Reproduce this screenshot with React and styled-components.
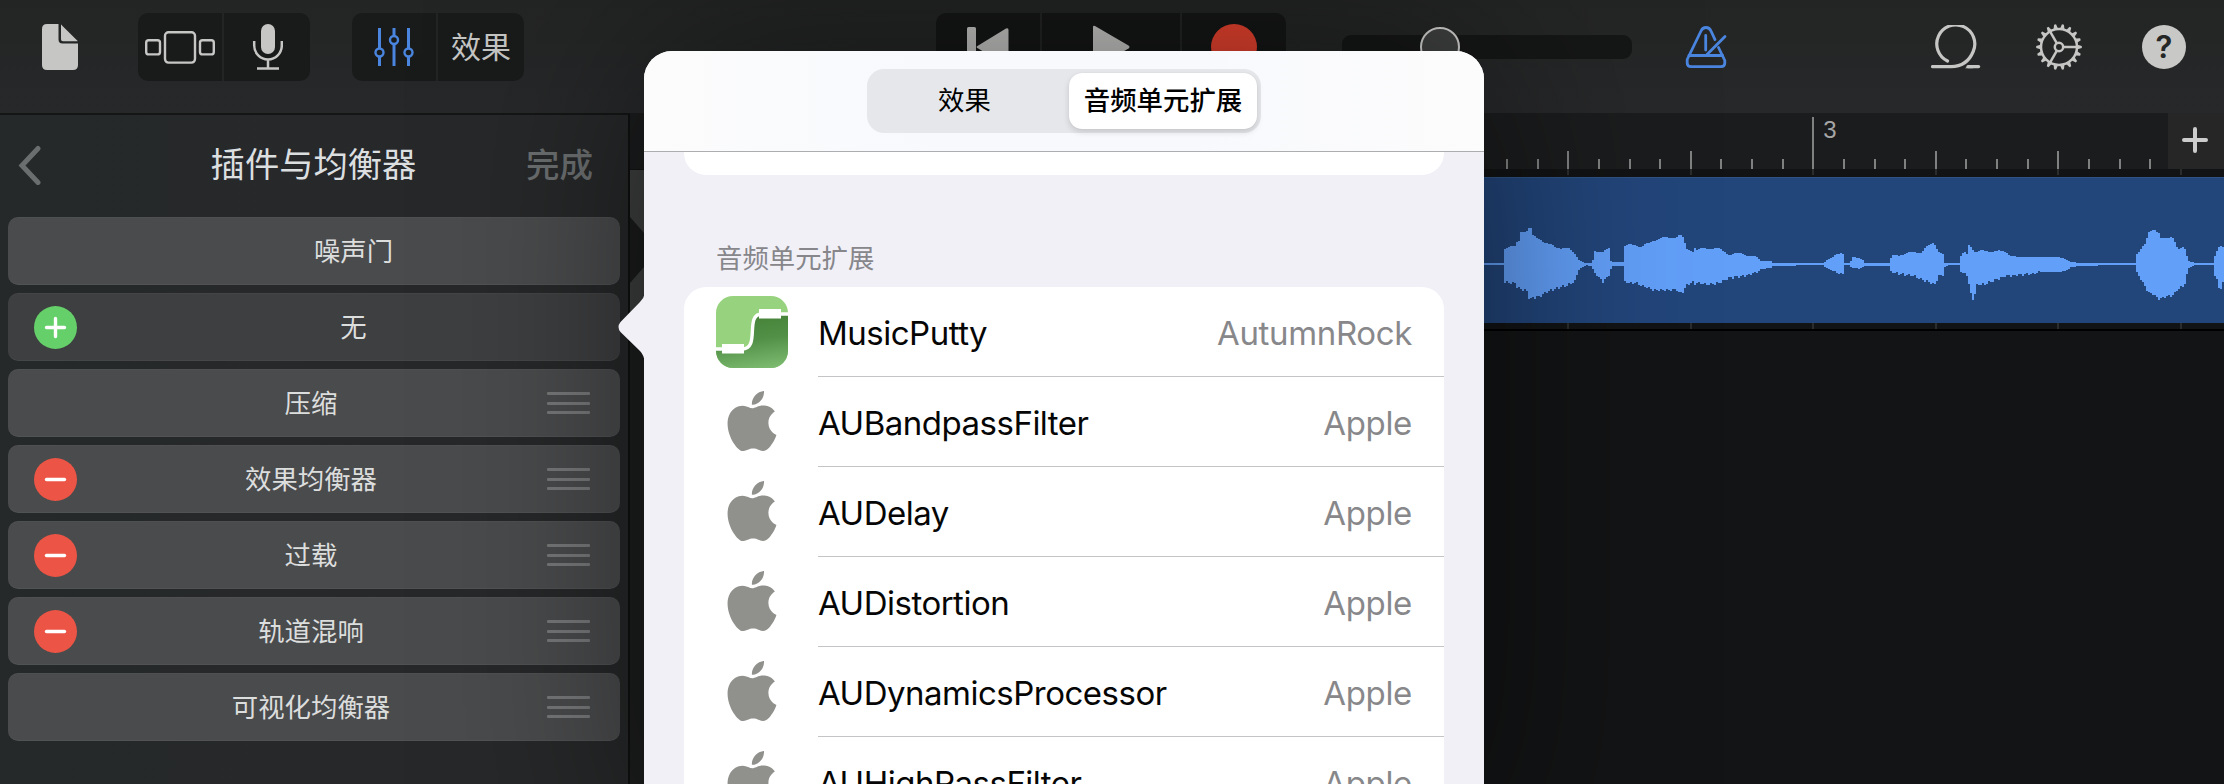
import React from "react";
import styled, { createGlobalStyle, css } from "styled-components";
import { SiApple } from "react-icons/si";

const Global = createGlobalStyle`
  *, *::before, *::after { box-sizing: border-box; }
  html, body { margin: 0; padding: 0; background: #131415; }
  body { font-family: Inter, "Noto Sans CJK SC", sans-serif; }
`;

const Screen = styled.div`
  position: relative;
  width: 2224px;
  height: 784px;
  overflow: hidden;
  display: flex;
  flex-direction: column;
  background: #131415;
`;

/* ---------- Toolbar ---------- */

const Toolbar = styled.header`
  flex: none;
  height: 113px;
  display: flex;
  align-items: flex-start;
  padding: 13px 38px 0 42px;
  background: linear-gradient(#232524, #27282a);
`;

const Slot = styled.div`
  flex: none;
  height: 68px;
  width: ${(p) => p.$w}px;
  margin-left: ${(p) => p.$gap || 0}px;
  display: flex;
  align-items: center;
  justify-content: center;
  color: ${(p) => p.$color || "#c6c6c5"};
`;

const ButtonGroup = styled.div`
  flex: none;
  display: flex;
  height: 68px;
  margin-left: ${(p) => p.$gap}px;
  border-radius: 10px;
  overflow: hidden;
  background: ${(p) => (p.$deep ? "#151716" : "#191b1a")};
`;

const GroupButton = styled.div`
  width: ${(p) => p.$w}px;
  display: flex;
  align-items: center;
  justify-content: center;
  color: ${(p) => p.$color || "#c6c6c5"};
  font-size: 30px;
  line-height: 68px;
  & + & {
    border-left: 2px solid #232524;
  }
`;

const VolumeTrack = styled.div`
  flex: none;
  width: 290px;
  height: 24px;
  margin: 22px 0 0 56px;
  padding-left: 78px;
  border-radius: 9px;
  background: #151716;
  display: flex;
  align-items: center;
`;

const VolumeKnob = styled.div`
  flex: none;
  width: 40px;
  height: 40px;
  border-radius: 50%;
  background: #3e403f;
  border: 2px solid #d0d0ce;
`;

/* ---------- Plug-in sidebar ---------- */

const Main = styled.main`
  flex: 1;
  min-height: 0;
  display: flex;
`;

const Sidebar = styled.aside`
  flex: none;
  width: 630px;
  border-top: 2px solid #141616;
  border-right: 2px solid #0f1010;
  background: linear-gradient(90deg, #25292a, #272829 60%, #262829);
`;

const SidebarHead = styled.div`
  height: 100px;
  margin-bottom: 2px;
  padding: 0 35px 0 18px;
  display: grid;
  grid-template-columns: 83px 1fr 67px;
  align-items: center;
`;

const SidebarTitle = styled.div`
  text-align: center;
  font-size: 34.3px;
  line-height: 50px;
  color: #dcdfe0;
`;

const DoneLabel = styled.div`
  font-size: 33.5px;
  line-height: 50px;
  font-weight: 500;
  color: #6c6f70;
  white-space: nowrap;
`;

const PluginList = styled.div`
  padding: 0 8px;
  display: flex;
  flex-direction: column;
  gap: 8px;
`;

const PluginRow = styled.div`
  height: 68px;
  display: flex;
  align-items: center;
  border-radius: 10px;
  background: ${(p) => (p.$empty ? "#3e3f40" : "#4a4b4c")};
  box-shadow: inset 0 -1px 0 rgba(255, 255, 255, 0.04), inset 0 1px 0 rgba(255, 255, 255, 0.03);
`;

const RowLead = styled.div`
  flex: none;
  width: 79px;
  padding-left: 26px;
`;

const RowLabel = styled.div`
  flex: 1;
  text-align: center;
  font-size: 26.4px;
  line-height: 40px;
  font-weight: 400;
  color: #dcdddd;
`;

const Badge = styled.div`
  width: 43px;
  height: 43px;
  border-radius: 50%;
  background: ${(p) => (p.$add ? "#65d069" : "#ec5545")};
  display: flex;
`;

const Grip = styled.div`
  flex: none;
  width: 85px;
  height: 22px;
  padding: 0 30px 0 12px;
  display: flex;
  flex-direction: column;
  justify-content: space-between;
  &::before,
  &::after {
    content: "";
  }
  &::before,
  &::after,
  & > i {
    height: 3px;
    border-radius: 1px;
    background: #77797a;
  }
`;

/* ---------- Timeline ---------- */

const Timeline = styled.section`
  flex: 1;
  min-width: 0;
  display: flex;
  flex-direction: column;
`;

const RulerRow = styled.div`
  flex: none;
  height: 56px;
  display: flex;
  background: #1b1c1d;
`;

const Ticks = styled.div`
  flex: 1;
  min-width: 0;
  height: 100%;
  overflow: hidden;
  display: flex;
  align-items: ${(p) => (p.$faint ? "flex-start" : "flex-end")};
  padding-left: 18.600px;
`;

const tickHeights = { bar: 52, beat: 18, minor: 10 };

const Tick = styled.div`
  flex: none;
  width: 30.630px;
  height: ${(p) => tickHeights[p.$kind]}px;
  border-left: 2px solid #7f8080;
  padding-left: 9px;
  font: 400 24px/26px "Liberation Sans", sans-serif;
  color: #a5a6a6;
  ${(p) =>
    p.$faint &&
    css`
      height: 6px;
      border-color: ${p.$kind === "minor" ? "transparent" : "#2b2d2d"};
    `}
`;

const AddTrack = styled.div`
  flex: none;
  width: 56px;
  display: flex;
  align-items: center;
  justify-content: center;
  padding-right: 3px;
  background: #252625;
`;

const Gap = styled.div`
  flex: none;
  height: ${(p) => p.$h}px;
  background: #121314;
`;

const TrackRow = styled.div`
  flex: none;
  height: 146px;
  display: flex;
  background: #22457a;
  border-top: 1px solid #2f5384;
`;

const TrackLead = styled.div`
  flex: none;
  width: 854px;
  margin-top: -8px;
  background: #1a1c1b;
`;

const Lanes = styled.div`
  flex: 1;
  border-top: 2px solid #000;
  background: linear-gradient(90deg, #1c1e1d 30px, #131415 30px);
`;

/* ---------- Popover ---------- */

const Popover = styled.div`
  position: absolute;
  left: 644px;
  top: 51px;
  width: 840px;
  height: 800px;
  border-radius: 28px;
  background: #f1f0f6;
  box-shadow: 0 0 200px rgba(0, 0, 0, 0.5);
`;

const Arrow = styled.svg`
  position: absolute;
  left: -26px;
  top: 242px;
`;

const PopoverHead = styled.div`
  height: 101px;
  display: flex;
  align-items: flex-start;
  justify-content: center;
  padding: 18px 0 0 0;
  border-radius: 28px 28px 0 0;
  border-bottom: 1px solid #acadaf;
  background: linear-gradient(90deg, #fcfcfc, #f7f9fd 35%, #f8f9fd 65%, #fcfcfc);
`;

const Segmented = styled.div`
  width: 394px;
  height: 64px;
  padding: 4px;
  border-radius: 17px;
  display: flex;
  background: #e6e7eb;
`;

const Segment = styled.div`
  width: ${(p) => (p.$on ? 188 : 198)}px;
  height: 56px;
  padding-right: ${(p) => (p.$on ? 0 : 11)}px;
  border-radius: 13px;
  text-align: center;
  font-size: 26.4px;
  line-height: 55.500px;
  font-weight: ${(p) => (p.$on ? 500 : 400)};
  color: #000;
  ${(p) =>
    p.$on &&
    css`
      background: #fff;
      box-shadow: 0 3px 6px rgba(0, 0, 0, 0.14), 0 0 1px rgba(0, 0, 0, 0.1);
    `}
`;

const PopoverBody = styled.div`
  padding: 0 40px;
`;

const PriorCard = styled.div`
  height: 23px;
  border-radius: 0 0 22px 22px;
  background: #fff;
`;

const SectionLabel = styled.div`
  height: 112px;
  padding: 63px 0 0 32px;
  font-size: 26.4px;
  line-height: 40px;
  color: #86868b;
`;

const UnitList = styled.div`
  border-radius: 22px 22px 0 0;
  background: #fff;
`;

const UnitRow = styled.div`
  height: 90px;
  display: flex;
`;

const UnitIcon = styled.div`
  flex: none;
  width: 134px;
  padding: ${(p) => (p.$logo ? "0 0 2px 38px" : "0 0 0 32px")};
  display: flex;
  align-items: center;
  color: #90918c;
`;

const UnitText = styled.div`
  flex: 1;
  display: flex;
  justify-content: space-between;
  padding: 0 32px 0 0;
  border-bottom: 1px solid #c4c4c6;
  font-size: 33px;
  line-height: 93px;
  letter-spacing: -0.5px;
  color: #060606;
`;

const Vendor = styled.span`
  letter-spacing: -0.35px;
  color: #88888b;
`;

/* ---------- Drawings ---------- */

const DocIcon = () => (
  <svg width="36" height="46" viewBox="0 0 36 46" fill="currentColor">
    <path d="M5 0H16.5V15.5Q16.5 19.6 20.5 19.6H36V41Q36 46 31 46H5Q0 46 0 41V5Q0 0 5 0Z" />
    <path d="M19 .6Q19.4 .8 20 1.4L35.2 16.6Q35.6 17 35.6 17.2H21Q19 17.2 19 15.2Z" />
  </svg>
);

const BrowserIcon = () => (
  <svg width="70" height="33" viewBox="0 0 70 33" fill="none" stroke="currentColor" strokeWidth="2.4">
    <rect x="1.2" y="9.2" width="13.8" height="14.2" rx="2.5" />
    <rect x="20" y="1.2" width="30" height="30.4" rx="3.5" />
    <rect x="55" y="9.2" width="13.8" height="14.2" rx="2.5" />
  </svg>
);

const MicIcon = () => (
  <svg width="32" height="46" viewBox="0 0 32 46" fill="none" stroke="currentColor" strokeWidth="2.5">
    <rect x="10" y="0" width="14" height="30" rx="7" fill="currentColor" stroke="none" />
    <path d="M3.200 17V21.5A13.8 14 0 0 0 30.800 21.5V17M17 35.5V44M6 44.6H28" />
  </svg>
);

const FadersIcon = () => (
  <svg width="40" height="38" viewBox="0 0 40 38" fill="none" stroke="currentColor" strokeWidth="3">
    <path d="M5.5 0V20M5.5 29V38M20 0V7.5M20 16.5V38M34.5 0V20M34.5 29V38" />
    <circle cx="5.5" cy="24.5" r="4" strokeWidth="2.4" />
    <circle cx="20" cy="12" r="4" strokeWidth="2.4" />
    <circle cx="34.5" cy="24.5" r="4" strokeWidth="2.4" />
  </svg>
);

const RewindIcon = () => (
  <svg width="42" height="40" viewBox="0 0 42 40" fill="currentColor">
    <rect x="0" y="0" width="9" height="40" rx="1.5" />
    <path d="M39 1.6L10 19.2Q9 20 10 20.8L39 38.4Q41.500 39.500 41.500 37V3Q41.500 .5 39 1.600Z" />
  </svg>
);

const PlayIcon = () => (
  <svg width="38" height="44" viewBox="0 0 38 44" fill="currentColor">
    <path d="M1 2Q1 .2 3 1L36.500 20.500Q38.500 22 36.500 23.500L3 43Q1 44 1 42Z" />
  </svg>
);

const RecordIcon = () => (
  <svg width="46" height="46" viewBox="0 0 46 46" fill="#e8432f">
    <circle cx="23" cy="23" r="23" />
  </svg>
);

const MetronomeIcon = () => (
  <svg width="42" height="42" viewBox="0 0 42 42" fill="none" stroke="currentColor" strokeWidth="2.8" strokeLinecap="round" strokeLinejoin="round">
    <path d="M30 13.600L26 5Q24.500 1.500 21 1.500Q17.500 1.500 16 5L2.200 33.500V37Q2.200 40.600 6 40.600H36Q39.800 40.600 39.800 37V34.500L33.500 21.500" />
    <path d="M4 29.500H37.500M20.700 9.500V24M40 10.500L22 28.500" />
  </svg>
);

const LoopIcon = () => (
  <svg width="50" height="44" viewBox="0 0 50 44" fill="none" stroke="currentColor" strokeWidth="3.2">
    <path d="M16.500 36A19 19 0 1 1 42.200 26.500Q36 41.600 20 41.600H1.500" strokeLinecap="round" />
    <path d="M37 41.600H47.600" strokeLinecap="round" />
    <path d="M34 43.200L38.500 40H42V43.200Z" fill="currentColor" stroke="none" />
  </svg>
);

const teeth = Array.from({ length: 18 }, (_, i) => i * 20);

const GearIcon = () => (
  <svg width="46" height="46" viewBox="-23 -23 46 46" fill="none" stroke="currentColor" strokeWidth="2.5">
    <circle r="18" />
    <circle r="4.200" />
    {[0, 120, 240].map((a) => (
      <path key={a} d="M4.500 0H18" transform={`rotate(${a})`} />
    ))}
    {teeth.map((a) => (
      <path key={a} d="M18.500 -2.200L22.800 -1V1L18.500 2.200Z" fill="currentColor" stroke="none" transform={`rotate(${a})`} />
    ))}
  </svg>
);

const HelpDisc = styled.div`
  width: 44px;
  height: 44px;
  border-radius: 50%;
  background: #c8c8c7;
  color: #252626;
  text-align: center;
  font: 600 31px/44px Inter, sans-serif;
`;

const BackIcon = () => (
  <svg width="24" height="40" viewBox="0 0 24 40" fill="none" stroke="#6b6e6f" strokeWidth="5" strokeLinecap="round">
    <path d="M20 3.500L4 20.500L20 37.500" />
  </svg>
);

const Mark = ({ plus }) => (
  <svg width="43" height="43" viewBox="0 0 43 43" stroke="#fff" strokeWidth="3.400" strokeLinecap="round">
    <path d={plus ? "M12.500 21.500H30.500M21.500 12.500V30.500" : "M12.500 21.500H30.500"} />
  </svg>
);

const PlusIcon = () => (
  <svg width="28" height="28" viewBox="0 0 28 28" stroke="#cbcccb" strokeWidth="4" strokeLinecap="round">
    <path d="M3 13H25M14 2V24" />
  </svg>
);

const PuttyIcon = () => (
  <svg width="72" height="72" viewBox="0 0 72 72">
    <defs>
      <linearGradient id="putty" x1=".6" y1="0" x2=".8" y2="1">
        <stop offset="0" stopColor="#468339" />
        <stop offset=".45" stopColor="#529047" />
        <stop offset="1" stopColor="#7dbb71" />
      </linearGradient>
      <clipPath id="puttyTile">
        <rect width="72" height="72" rx="17" />
      </clipPath>
    </defs>
    <g clipPath="url(#puttyTile)">
      <rect width="72" height="72" fill="#97d27e" />
      <path d="M0 53H26C46 53 28 18 46 18H72V72H0Z" fill="url(#putty)" />
      <path d="M0 53H26C45 53 28 18 46 18H72" fill="none" stroke="#fff" strokeWidth="3.400" />
      <rect x="6" y="48" width="22" height="9.500" fill="#fff" />
      <rect x="43" y="13" width="22" height="9.500" fill="#fff" />
    </g>
  </svg>
);

const TrackHeaderEdge = () => (
  <svg width="20" height="154" viewBox="0 0 20 154">
    <path d="M0 0H20V68L14 63L0 47Z" fill="#3d3f3e" />
    <path d="M0 113L14 97L20 92V154H0Z" fill="#3d3f3e" />
  </svg>
);

/* Envelope of the recorded take: [x, height above centre, depth below centre] */
const envelope = [
  [1484, 1, 1], [1503, 1, 1], [1504, 16, 18], [1514, 17, 19], [1516, 22, 23], [1519, 25, 25], [1520, 33, 25], [1526, 33, 27],
  [1527, 35, 34], [1531, 35, 35], [1532, 28, 34], [1540, 25, 32], [1547, 19, 27], [1567, 15, 21], [1574, 11, 17],
  [1577, 5, 7], [1580, 2.5, 4], [1585, 1, 1], [1591, 1, 2], [1593, 6, 8], [1594, 14, 9], [1602, 12, 18], [1608, 15, 11],
  [1610, 3, 5], [1612, 2, 2], [1623, 1.5, 2], [1624, 17, 18], [1629, 20, 19], [1635, 20, 19], [1640, 16, 21], [1652, 24, 26],
  [1670, 27, 26], [1677, 27, 26], [1679, 29, 30], [1683, 25, 27], [1685, 16, 21], [1692, 13, 18], [1693, 19, 22], [1695, 13, 18],
  [1703, 16, 20], [1715, 16, 20], [1728, 10, 14], [1743, 10, 12], [1757, 7, 8], [1759, 3, 5], [1770, 2.5, 4], [1772, 1, 2],
  [1790, 1, 2], [1800, 1, 1], [1823, 1, 1], [1825, 3, 4], [1833, 8, 7], [1840, 12, 10], [1843, 11, 9], [1844, 1, 1],
  [1848, 1, 1], [1850, 3, 3], [1852, 7, 4], [1858, 6, 4.5], [1862, 4, 3], [1863, 1, 2], [1885, 1, 2], [1888, 1, 2],
  [1889, 5, 6], [1893, 10, 9], [1905, 9, 11], [1913, 13, 12], [1920, 11, 15], [1925, 16, 17], [1933, 22, 20], [1935, 19, 20],
  [1937, 13, 12], [1943, 9, 10], [1944, 1, 3], [1948, 1, 1], [1959, 1, 1], [1960, 8, 8], [1963, 11, 10], [1967, 9, 11],
  [1968, 19, 20], [1971, 17, 35], [1973, 13, 36], [1975, 13, 23], [1977, 13, 20], [1985, 12, 20], [1994, 14, 16],
  [2005, 11, 12], [2017, 7, 11], [2030, 7, 10], [2040, 6.5, 8], [2058, 7, 8], [2066, 4, 6], [2070, 2, 3], [2078, 1, 2],
  [2095, 1, 2], [2098, 1, 1], [2135, 1, 1], [2136, 9, 9], [2141, 18, 17], [2145, 22, 24], [2147, 31, 28], [2152, 33, 30],
  [2158, 32, 35], [2160, 27, 34], [2172, 25, 31], [2177, 16, 25], [2183, 18, 22], [2185, 13, 18], [2187, 3, 5], [2192, 2, 2],
  [2195, 1, 1], [2212, 1, 1], [2213, 6, 8], [2217, 17, 18], [2219, 20, 30], [2221, 17, 18], [2224, 18, 20],
];

const sample = (x, k) => {
  const i = Math.max(1, envelope.findIndex((p) => p[0] >= x));
  const a = envelope[i - 1];
  const b = envelope[i];
  return a[k] + ((b[k] - a[k]) * (x - a[0])) / (b[0] - a[0]);
};

const wavePath = (() => {
  const top = [];
  const bottom = [];
  for (let x = 1484; x < 2224; x += 2) {
    const up = sample(x, 1);
    const down = sample(x, 2);
    const noiseUp = up > 8 ? Math.sin(x * 12.9) * 1.2 : 0;
    const noiseDown = down > 8 ? Math.sin(x * 7.3) * 1.2 : 0;
    const u = 86 - Math.round(up + noiseUp);
    const d = 86 + Math.round(down + noiseDown);
    top.push(`${x - 1484} ${u}L${x - 1482} ${u}`);
    bottom.unshift(`${x - 1482} ${d}L${x - 1484} ${d}`);
  }
  return `M${top.join("L")}L${bottom.join("L")}Z`;
})();

const Waveform = () => (
  <svg width="740" height="145" viewBox="0 0 740 145">
    <path d={wavePath} fill="#629ff8" />
  </svg>
);

/* ---------- Content ---------- */

const plugins = [
  { name: "噪声门" },
  { name: "无", badge: "add", empty: true },
  { name: "压缩", grip: true },
  { name: "效果均衡器", badge: "remove", grip: true },
  { name: "过载", badge: "remove", grip: true },
  { name: "轨道混响", badge: "remove", grip: true },
  { name: "可视化均衡器", grip: true },
];

const units = [
  { name: "MusicPutty", vendor: "AutumnRock", putty: true },
  { name: "AUBandpassFilter", vendor: "Apple" },
  { name: "AUDelay", vendor: "Apple" },
  { name: "AUDistortion", vendor: "Apple" },
  { name: "AUDynamicsProcessor", vendor: "Apple" },
  { name: "AUHighPassFilter", vendor: "Apple" },
];

const ticks = Array.from({ length: 54 }, (_, i) => {
  const step = i - 38;
  return step % 16 === 0 ? "bar" : step % 4 === 0 ? "beat" : "minor";
});

const TickStrip = ({ faint }) => (
  <Ticks $faint={faint}>
    {ticks.map((kind, i) => (
      <Tick key={i} $kind={kind} $faint={faint}>
        {!faint && i === 38 ? "3" : null}
      </Tick>
    ))}
  </Ticks>
);

export default function App() {
  return (
    <Screen>
      <Global />
      <Toolbar>
        <Slot $w={36}><DocIcon /></Slot>
        <ButtonGroup $gap={60}>
          <GroupButton $w={84}><BrowserIcon /></GroupButton>
          <GroupButton $w={88}><MicIcon /></GroupButton>
        </ButtonGroup>
        <ButtonGroup $gap={42}>
          <GroupButton $w={84} $color="#4a85e0"><FadersIcon /></GroupButton>
          <GroupButton $w={88}>效果</GroupButton>
        </ButtonGroup>
        <ButtonGroup $gap={412} $deep>
          <GroupButton $w={104}><RewindIcon /></GroupButton>
          <GroupButton $w={140}><PlayIcon /></GroupButton>
          <GroupButton $w={106}><RecordIcon /></GroupButton>
        </ButtonGroup>
        <VolumeTrack><VolumeKnob /></VolumeTrack>
        <Slot $gap={53} $w={42} $color="#4a85e0"><MetronomeIcon /></Slot>
        <Slot $gap={204} $w={50}><LoopIcon /></Slot>
        <Slot $gap={55} $w={46}><GearIcon /></Slot>
        <Slot $gap={60} $w={44}><HelpDisc>?</HelpDisc></Slot>
      </Toolbar>

      <Main>
        <Sidebar>
          <SidebarHead>
            <BackIcon />
            <SidebarTitle>插件与均衡器</SidebarTitle>
            <DoneLabel>完成</DoneLabel>
          </SidebarHead>
          <PluginList>
            {plugins.map((p) => (
              <PluginRow key={p.name} $empty={p.empty}>
                <RowLead>
                  {p.badge && (
                    <Badge $add={p.badge === "add"}>
                      <Mark plus={p.badge === "add"} />
                    </Badge>
                  )}
                </RowLead>
                <RowLabel>{p.name}</RowLabel>
                {p.grip && <Grip><i /></Grip>}
              </PluginRow>
            ))}
          </PluginList>
        </Sidebar>

        <Timeline>
          <RulerRow>
            <TickStrip />
            <AddTrack><PlusIcon /></AddTrack>
          </RulerRow>
          <Gap $h={8}><TickStrip faint /></Gap>
          <TrackRow>
            <TrackLead><TrackHeaderEdge /></TrackLead>
            <Waveform />
          </TrackRow>
          <Gap $h={6}><TickStrip faint /></Gap>
          <Lanes />
        </Timeline>
      </Main>

      <Popover>
        <Arrow width="27" height="72" viewBox="0 0 27 72">
          <path d="M27 0Q26 5 22 9L2.500 29Q-1.500 34 2.500 39L22 58Q26 62 27 70Z" fill="#f1f0f6" />
        </Arrow>
        <PopoverHead>
          <Segmented>
            <Segment>效果</Segment>
            <Segment $on>音频单元扩展</Segment>
          </Segmented>
        </PopoverHead>
        <PopoverBody>
          <PriorCard />
          <SectionLabel>音频单元扩展</SectionLabel>
          <UnitList>
            {units.map((u) => (
              <UnitRow key={u.name}>
                <UnitIcon $logo={!u.putty}>{u.putty ? <PuttyIcon /> : <SiApple size={60} />}</UnitIcon>
                <UnitText>
                  <span>{u.name}</span>
                  <Vendor>{u.vendor}</Vendor>
                </UnitText>
              </UnitRow>
            ))}
          </UnitList>
        </PopoverBody>
      </Popover>
    </Screen>
  );
}
